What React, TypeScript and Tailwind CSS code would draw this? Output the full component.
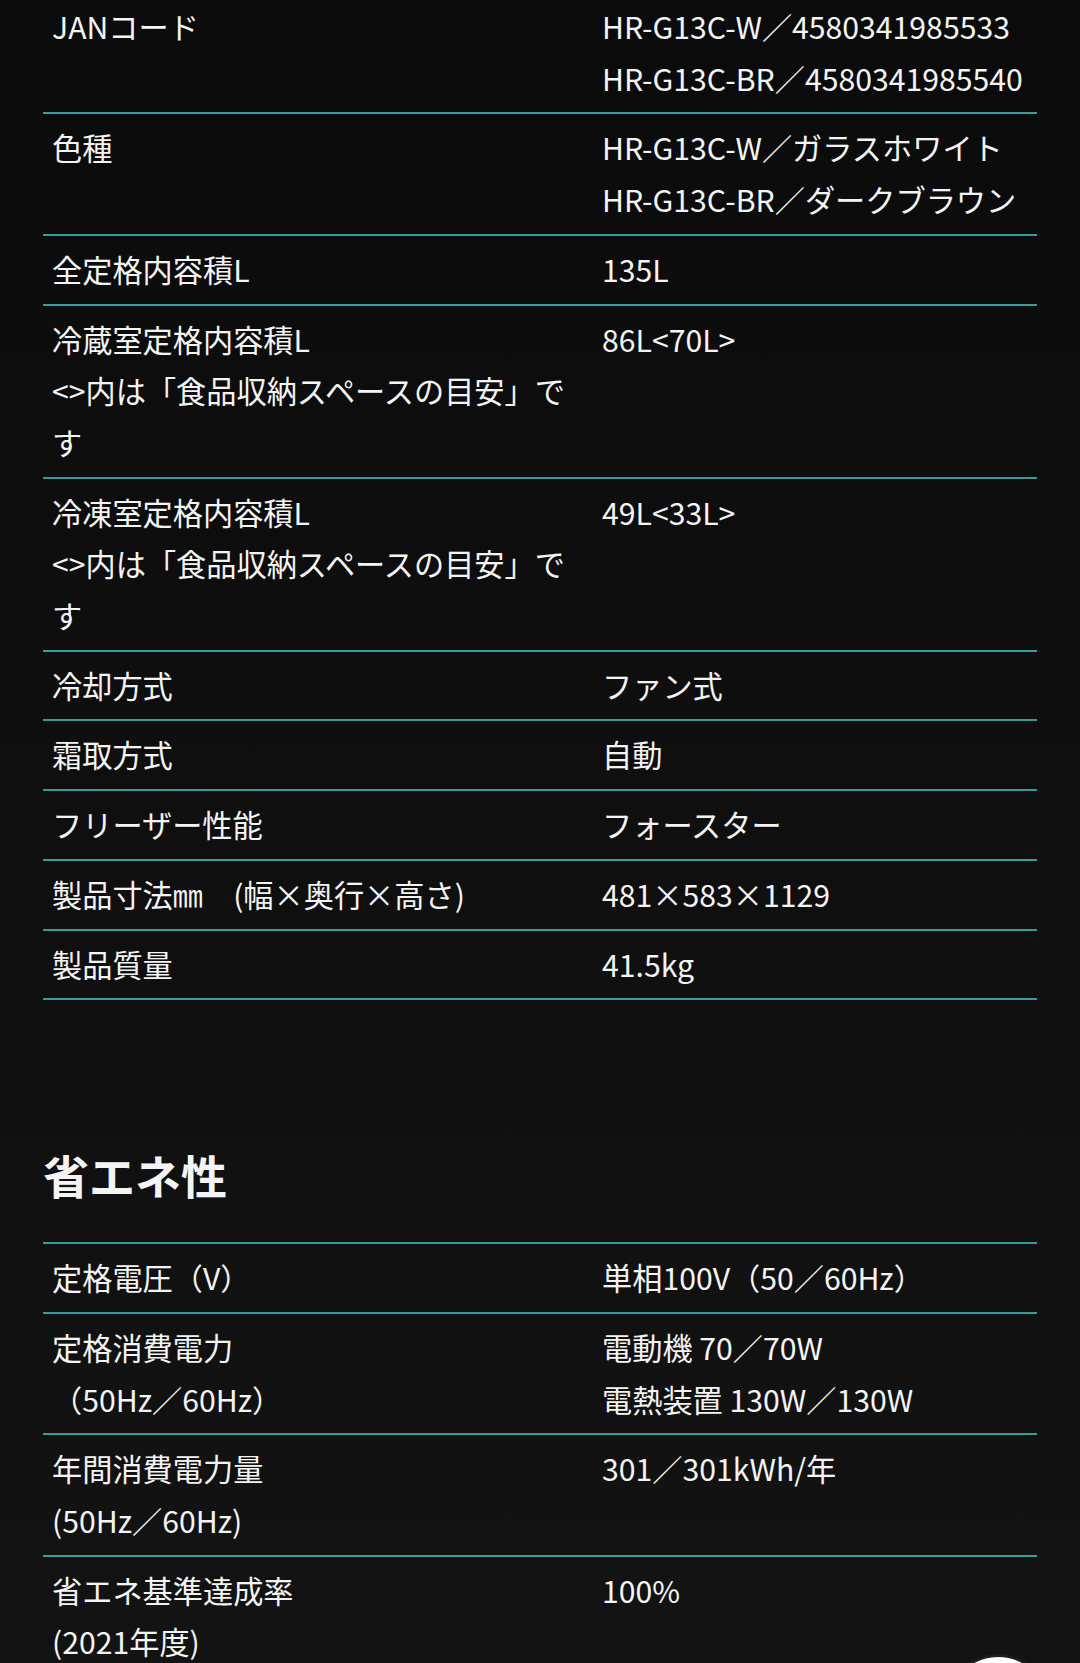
import React from "react";

type Row = { label: React.ReactNode; value: React.ReactNode };

const L = ({ children }: { children: React.ReactNode }) => (
  <span className="block whitespace-nowrap">{children}</span>
);

const table1: Row[] = [
  {
    label: "JANコード",
    value: (
      <>
        <L>HR-G13C-W／4580341985533</L>
        <L>HR-G13C-BR／4580341985540</L>
      </>
    ),
  },
  {
    label: "色種",
    value: (
      <>
        <L>HR-G13C-W／ガラスホワイト</L>
        <L>HR-G13C-BR／ダークブラウン</L>
      </>
    ),
  },
  { label: "全定格内容積L", value: "135L" },
  {
    label: (
      <>
        冷蔵室定格内容積L
        <br />
        {"<>内は「食品収納スペースの目安」です"}
      </>
    ),
    value: "86L<70L>",
  },
  {
    label: (
      <>
        冷凍室定格内容積L
        <br />
        {"<>内は「食品収納スペースの目安」です"}
      </>
    ),
    value: "49L<33L>",
  },
  { label: "冷却方式", value: "ファン式" },
  { label: "霜取方式", value: "自動" },
  { label: "フリーザー性能", value: "フォースター" },
  { label: "製品寸法㎜　(幅×奥行×高さ)", value: "481×583×1129" },
  { label: "製品質量", value: "41.5kg" },
];

const table2: Row[] = [
  { label: "定格電圧（V）", value: "単相100V（50／60Hz）" },
  {
    label: (
      <>
        定格消費電力
        <br />
        （50Hz／60Hz）
      </>
    ),
    value: (
      <>
        <L>電動機 70／70W</L>
        <L>電熱装置 130W／130W</L>
      </>
    ),
  },
  {
    label: (
      <>
        年間消費電力量
        <br />
        (50Hz／60Hz)
      </>
    ),
    value: "301／301kWh/年",
  },
  {
    label: (
      <>
        省エネ基準達成率
        <br />
        (2021年度)
      </>
    ),
    value: "100%",
  },
];

function SpecRow({ row }: { row: Row }) {
  return (
    <div className="grid grid-cols-[550px_1fr] border-b-2 border-[#3a9c98]">
      <div className="px-[9px] py-[8px]">{row.label}</div>
      <div className="px-[9px] py-[8px]">{row.value}</div>
    </div>
  );
}

export default function App() {
  return (
    <div className="relative w-[1080px] h-[1663px] overflow-hidden bg-linear-to-b from-[#0b0b0b] to-[#131313] text-[#f4f4f4] font-['Noto_Sans_CJK_JP',sans-serif] text-[30.2px] leading-[51.7px]">
      <div className="mx-[43px] mt-[-7px]">
        <div>
          {table1.map((r, i) => (
            <SpecRow key={i} row={r} />
          ))}
        </div>

        <h2 className="mt-[140px] mb-[34px] text-[46px] leading-[68px] font-bold">
          省エネ性
        </h2>

        <div className="border-t-2 border-[#3a9c98]">
          {table2.map((r, i) => (
            <SpecRow key={i} row={r} />
          ))}
        </div>
      </div>

      <div className="absolute left-[946px] top-[1654px] w-[104px] h-[104px] rounded-full bg-white border-[3px] border-[#1c1c1c]" />
    </div>
  );
}
